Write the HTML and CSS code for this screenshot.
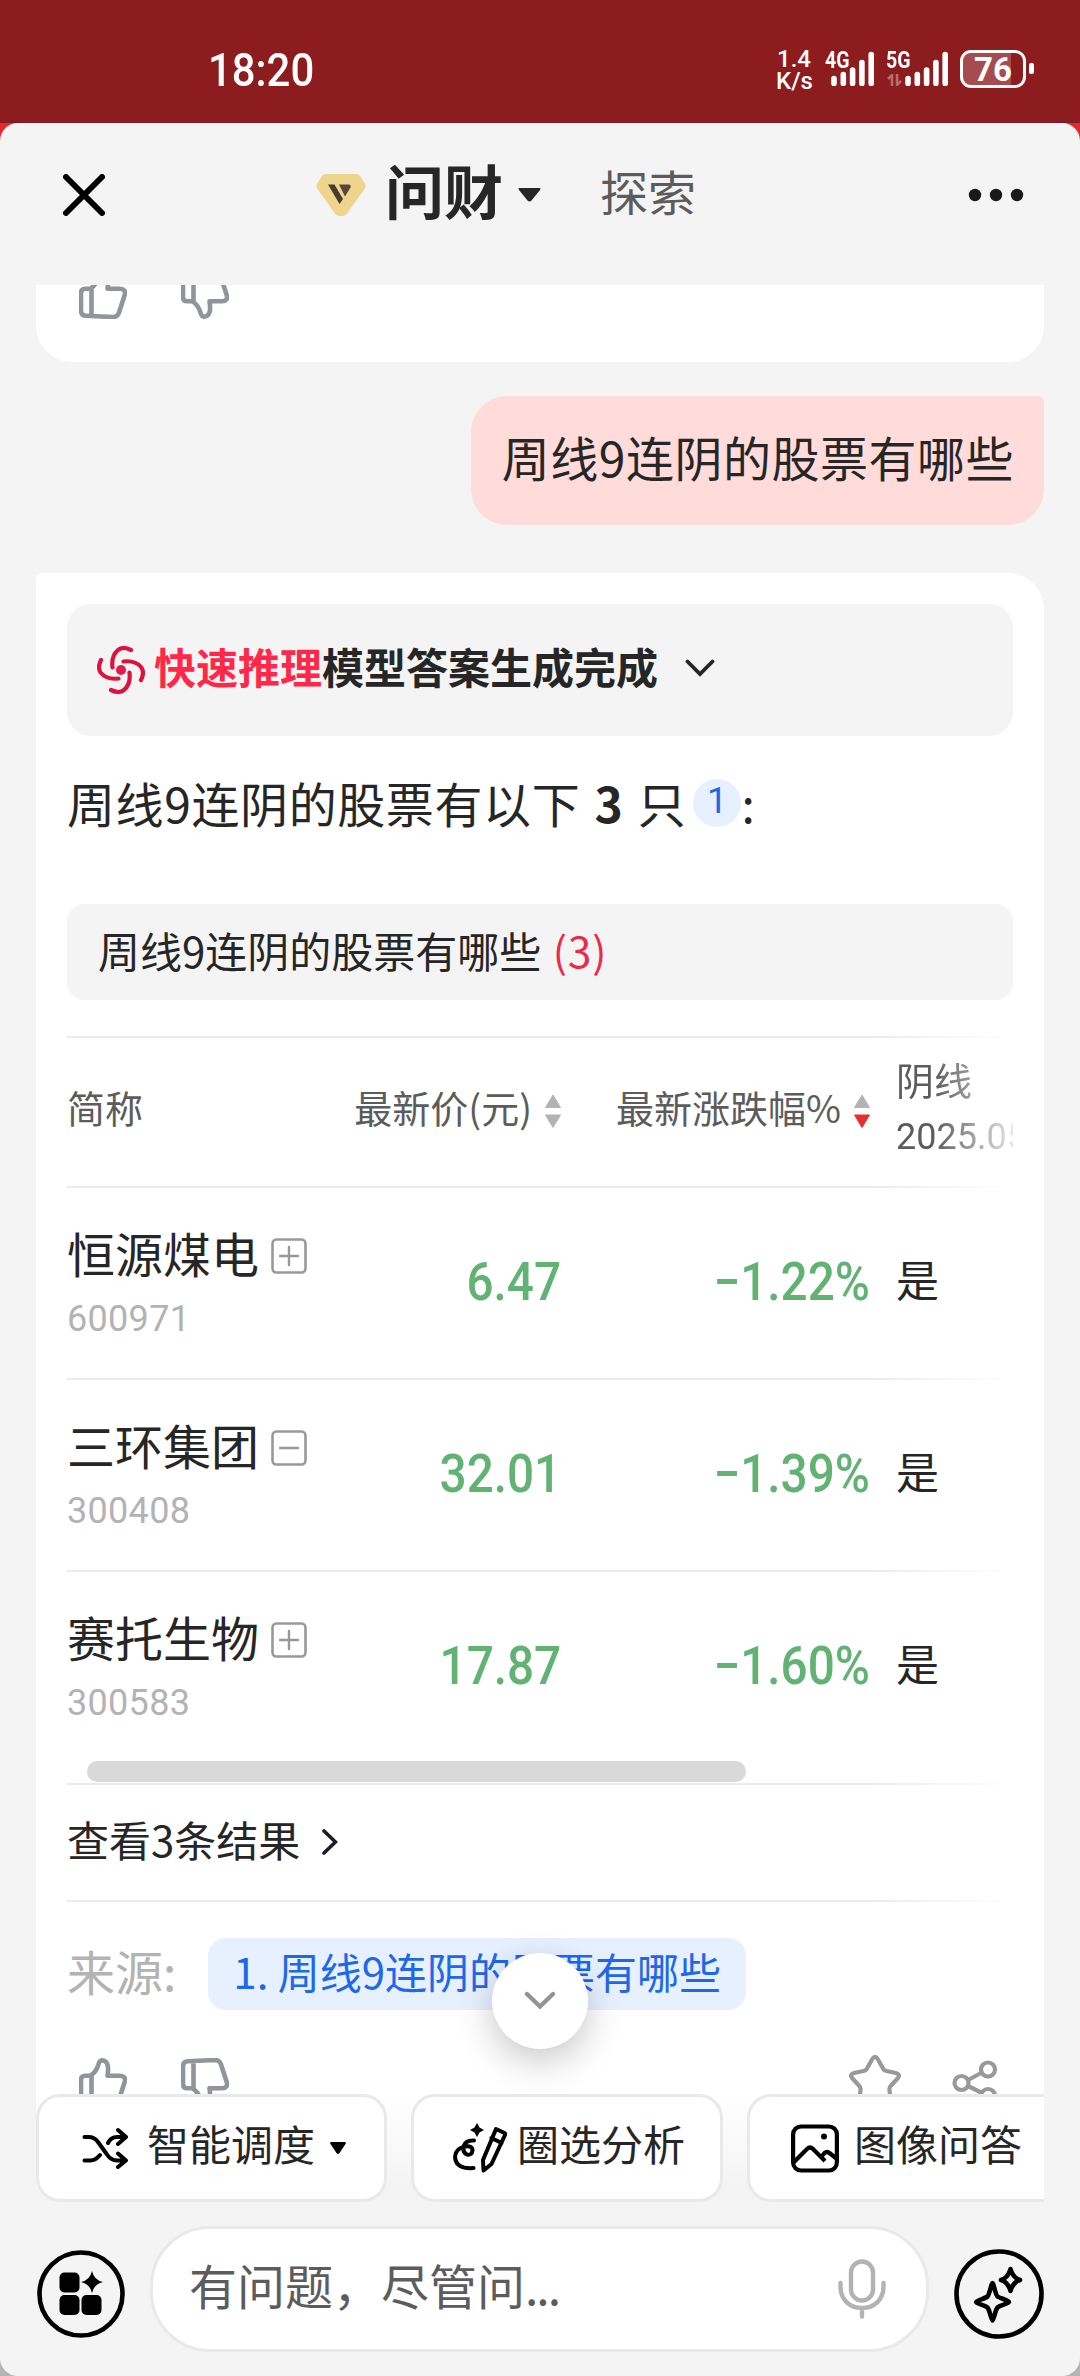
FILE: index.html
```html
<!DOCTYPE html>
<html lang="zh-CN">
<head>
  <meta charset="UTF-8">
  <title>问财</title>
  <link rel="stylesheet" href="styles.css">
</head>
<body>

<!-- icons used more than once -->
<svg class="defs" width="0" height="0">
  <symbol id="thumb" viewBox="0 0 48 48">
    <path d="M2 22v17.500q0 5 5 5.200l27 1.300q4.500 0 6-4.500l5.700-17.500q1.500-6.300-4.700-6.300h-12.500q2.500-15.200-5.500-15.400q-2.500 0-3.700 4.500q-2.300 7.800-8.300 10.900h-5q-4 .3-4 4.300zM12.500 18v26.500" fill="none" stroke="currentColor" stroke-width="4.600" stroke-linejoin="round"/>
  </symbol>
  <symbol id="sort" viewBox="0 0 16 34">
    <path d="M8 1l7.500 12.500h-15z" fill="#b3b3b3" stroke="#b3b3b3" stroke-linejoin="round"/>
    <path d="M8 33.500l7.500-12.500h-15z" fill="currentColor" stroke="currentColor" stroke-linejoin="round"/>
  </symbol>
  <symbol id="signal" viewBox="0 0 44 36">
    <path d="M3 28.500v5M12.300 24.500v9M21.600 20v13.500M30.900 12.500v21M40.200 4.500v29" stroke="#fff" stroke-width="5.600" stroke-linecap="round"/>
  </symbol>
  <symbol id="plus" viewBox="0 0 36 36">
    <rect x="1.500" y="1.500" width="33" height="33" rx="4" fill="none" stroke="#999" stroke-width="2.600"/>
    <path d="M9 18h18M18 9v18" stroke="#999" stroke-width="2.400" stroke-linecap="round"/>
  </symbol>
  <symbol id="minus" viewBox="0 0 36 36">
    <rect x="1.500" y="1.500" width="33" height="33" rx="4" fill="none" stroke="#999" stroke-width="2.600"/>
    <path d="M9 18h18" stroke="#999" stroke-width="2.400" stroke-linecap="round"/>
  </symbol>
</svg>

<div class="status">
  <div class="time"><span>18:20</span></div>
  <div class="speed"><div>1.4</div><div>K/s</div></div>
  <div class="net net-4g"><span>4G</span><svg width="44" height="36"><use href="#signal"/></svg></div>
  <div class="net net-5g">
    <span>5G</span>
    <svg class="updown" width="15" height="12" viewBox="0 0 15 12"><path d="M1 5l4-4v11M14 7l-4 4V0" fill="none" stroke="#bd6a6c" stroke-width="2.500"/></svg>
    <svg width="44" height="36"><use href="#signal"/></svg>
  </div>
  <div class="battery"><span>76</span></div>
  <div class="nub"></div>
</div>

<div class="panel-wrap">
<div class="panel">

  <div class="header">
    <svg class="close" width="42" height="42" viewBox="0 0 42 42"><path d="M3 3l36 36M39 3L3 39" stroke="#000" stroke-width="6" stroke-linecap="round"/></svg>
    <svg class="vip" width="50" height="42" viewBox="0 0 50 42">
      <path d="M10 0h30q2.500 0 4 2l4.500 7q2 3 0 6l-17.500 24.500q-2 2.500-4 2.500h-4q-2 0-4-2.500l-17.500-24.500q-2-3 0-6l4.500-7q1.500-2 4-2z" fill="#efd48e"/>
      <path d="M12 10.500h6.500L27 25l-3.500 5z" fill="#453b30"/><path d="M23 10.500h10q2.500 1 1.500 3l-5.500 9z" fill="#54483a"/>
    </svg>
    <span class="tab active">问财</span>
    <svg class="tab-caret" width="23" height="14" viewBox="0 0 23 14"><path d="M2 0h19q2.500 0 1 2l-8.500 10.500q-2 2-4 0L1 2q-1.500-2 1-2z" fill="#262626"/></svg>
    <span class="tab">探索</span>
    <svg class="more" width="56" height="14" viewBox="0 0 56 14"><g fill="#191919"><circle cx="7" cy="7" r="6.200"/><circle cx="28" cy="7" r="6.200"/><circle cx="49" cy="7" r="6.200"/></g></svg>
  </div>

  <div class="chat">
    <div class="card prev">
      <svg class="thumb" width="48" height="48"><use href="#thumb"/></svg>
      <svg class="thumb down" width="48" height="48"><use href="#thumb"/></svg>
    </div>

    <div class="question">周线9连阴的股票有哪些</div>

    <div class="card answer">
      <div class="model">
        <svg width="48" height="48" viewBox="0 0 48 48">
          <g fill="none" stroke="#d8143f" stroke-width="4.200" stroke-linecap="round">
            <path id="arm" d="M34 4q-8-4-13 0q-7 6-5.500 17.500"/>
            <use href="#arm" transform="rotate(90 24 24)"/>
            <use href="#arm" transform="rotate(180 24 24)"/>
            <use href="#arm" transform="rotate(270 24 24)"/>
          </g>
          <circle cx="24" cy="24" r="5" fill="#e6194a"/>
        </svg>
        <b><em>快速推理</em>模型答案生成完成</b>
        <svg class="chev" width="30" height="18" viewBox="0 0 30 18"><path d="M2.500 2.500L15 15 27.500 2.500" fill="none" stroke="#262626" stroke-width="3.800" stroke-linecap="round"/></svg>
      </div>

      <div class="summary">周线9连阴的股票有以下 <b>3</b> 只<span class="ref">1</span>:</div>

      <div class="table-title">周线9连阴的股票有哪些 <span>(3)</span></div>

      <div class="table">
        <div class="row head">
          <div>简称</div>
          <div class="num">最新价(元)<svg class="sort" width="16" height="34"><use href="#sort"/></svg></div>
          <div class="num">最新涨跌幅%<svg class="sort on" width="16" height="34"><use href="#sort"/></svg></div>
          <div class="last">阴线<br><span>2025.05</span></div>
        </div>
        <div class="row">
          <div><div class="name">恒源煤电<svg width="36" height="36"><use href="#plus"/></svg></div><div class="code">600971</div></div>
          <div class="num green"><span>6.47</span></div>
          <div class="num green"><span>−1.22%</span></div>
          <div class="last">是</div>
        </div>
        <div class="row">
          <div><div class="name">三环集团<svg width="36" height="36"><use href="#minus"/></svg></div><div class="code">300408</div></div>
          <div class="num green"><span>32.01</span></div>
          <div class="num green"><span>−1.39%</span></div>
          <div class="last">是</div>
        </div>
        <div class="row">
          <div><div class="name">赛托生物<svg width="36" height="36"><use href="#plus"/></svg></div><div class="code">300583</div></div>
          <div class="num green"><span>17.87</span></div>
          <div class="num green"><span>−1.60%</span></div>
          <div class="last">是</div>
        </div>
        <div class="scrollbar"></div>
        <div class="all">查看3条结果<svg width="16" height="26" viewBox="0 0 16 26"><path d="M2 2l11.500 11L2 24" fill="none" stroke="#1c1c28" stroke-width="3.600" stroke-linecap="round"/></svg></div>
      </div>

      <div class="source">来源:<span>1. 周线9连阴的股票有哪些</span></div>

      <div class="actions">
        <svg class="thumb" width="48" height="48"><use href="#thumb"/></svg>
        <svg class="thumb down" width="48" height="48"><use href="#thumb"/></svg>
        <svg class="star" width="52" height="52" viewBox="0 0 52 52"><path d="M23 4.500q3-5 6 0l5 9q1 2 3.500 2.500l9.500 2q5 1.500 1.500 5.500l-6.500 7q-2 2-1.500 4.500l1 9.500q0 5-4.500 3.500l-8.500-4q-2.500-1-5 0l-8.500 4q-4.500 1.500-4.500-3.500l1-9.500q.5-2.500-1.500-4.500l-6.500-7q-3.500-4 1.500-5.500l9.500-2q2.500-.5 3.500-2.500z" fill="none" stroke="#999" stroke-width="4.200"/></svg>
        <svg class="share" width="46" height="46" viewBox="0 0 46 46"><g fill="none" stroke="#999" stroke-width="4.200"><circle cx="9.500" cy="23" r="7"/><circle cx="36" cy="9.500" r="7"/><circle cx="36" cy="36" r="7"/><path d="M16 20l14-7.500M16 26l14 7"/></g></svg>
      </div>
    </div>
  </div>

  <div class="to-bottom">
    <svg width="32" height="20" viewBox="0 0 32 20"><path d="M3 3l13 12.500L29 3" fill="none" stroke="#92929b" stroke-width="4.400" stroke-linecap="round"/></svg>
  </div>

  <div class="chips">
    <div class="chip c1">
      <svg width="46" height="42" viewBox="0 0 46 42"><g fill="none" stroke="#000" stroke-width="4" stroke-linecap="round" stroke-linejoin="round"><path d="M2.500 10h4q6 0 9.500 5l9 12.500q4 6 10 6h8M36 26.500l8 7-8 6.500M2.500 33.500h6q5 0 9.500-5.500M26 16q3-6 9-6h8M36 3l8 7-8 7"/></g></svg>
      <span>智能调度</span>
      <svg class="caret" width="16" height="13" viewBox="0 0 16 13"><path d="M1 0h14q1.500.5.500 2l-6 9q-1.500 2-3 0l-6-9q-1-1.500.5-2z"/></svg>
    </div>
    <div class="chip c2">
      <svg width="54" height="50" viewBox="0 0 54 50"><path d="M24 0l2.500 4.500L31 7l-4.500 2.500L24 14l-2.500-4.500L17 7l4.500-2.500z"/><g fill="none" stroke="#000" stroke-width="4" stroke-linejoin="round" stroke-linecap="round"><path d="M43 6l8.500 4q1 .5.500 2L38.500 41l-8 6.500-.5-10.500zM38.500 15l10 5"/><path d="M21 17.500q-8-.5-10 5q-2 7 3 9q5 1 5.500-4q0-5-7-4q-10 1.500-10.500 10.500q1 12.500 18.500 11"/></g></svg>
      <span>圈选分析</span>
    </div>
    <div class="chip c3">
      <svg width="48" height="49" viewBox="0 0 48 49"><g fill="none" stroke="#000" stroke-width="4.200"><rect x="2.100" y="2.500" width="43.800" height="44" rx="8"/><path d="M2 39l14-14q3-3 6 0l12 12M30.500 32.500l3-3.500q2.500-2 5 0l7.500 6" stroke-linejoin="round"/></g><circle cx="33" cy="12.500" r="3"/></svg>
      <span>图像问答</span>
    </div>
  </div>

  <div class="input-bar">
    <svg width="88" height="88" viewBox="0 0 88 88"><circle cx="44" cy="44" r="41.500" fill="none" stroke="#000" stroke-width="4.600"/><rect x="22.500" y="22.500" width="20" height="20" rx="5"/><rect x="22.500" y="45" width="20" height="20" rx="5"/><rect x="44.500" y="45" width="20" height="20" rx="5"/><path d="M55 21q2 9 11 11q-9 2-11 11q-2-9-11-11q9-2 11-11z"/></svg>
    <div class="input">
      <span>有问题，尽管问<i>...</i></span>
      <svg width="48" height="60" viewBox="0 0 48 60"><g fill="none" stroke="#b3b3b3" stroke-width="4.400" stroke-linecap="round"><rect x="13" y="2.500" width="22" height="39" rx="11"/><path d="M2.500 24v3.500c0 13 9 21.500 21.500 21.500s21.500-8.500 21.500-21.500V24M24 49v8.500"/></g></svg>
    </div>
    <svg width="90" height="90" viewBox="0 0 90 90"><g fill="none" stroke="#000" stroke-linejoin="round"><circle cx="45" cy="45" r="42.500" stroke-width="4.600"/><path d="M38.500 34c1 0 3 12 5 13.500s11.500 4 11.500 5.500-9.500 3.500-11.500 5.500-4 13-5 13-3-11-5-13-11.500-4-11.500-5.500 9.500-3.500 11.500-5.500 4-13.500 5-13.500z" stroke-width="4.600"/><path d="M56.500 20q2.500 9 9.500 11q-7 2-9.500 11q-2.500-9-9.500-11q7-2 9.500-11z" stroke-width="4.600"/></g></svg>
  </div>

</div>
</div>

</body>
</html>
```

FILE: styles.css
```css
* {
  box-sizing: border-box;
}
body {
  margin: 0;
  width: 1080px;
  height: 2376px;
  overflow: hidden;
  font-family: "Noto Sans CJK SC", sans-serif;
  color: #262626;
}
svg {
  display: block;
  flex: none;
}
.defs {
  position: absolute;
}

/* status bar */
.status {
  display: flex;
  align-items: flex-start;
  height: 123px;
  padding: 50px 0 0 208px;
  background: #8d1c1f;
  border-bottom: 1px solid #76202a;
  color: #fff;
  font-family: Roboto, sans-serif;
}
.time {
  width: 568px;
  font-size: 46px;
  font-weight: 500;
  line-height: 41px;
}
.time span {
  display: inline-block;
  transform: scaleX(0.91);
  transform-origin: left;
}
.speed {
  width: 36px;
  font-size: 24px;
  font-weight: 500;
  line-height: 22px;
  text-align: center;
  margin-top: -2px;
}
.net {
  position: relative;
  margin-left: 19px;
}
.net-5g {
  margin-left: 30px;
}
.net span {
  position: absolute;
  left: -6px;
  top: -1px;
  font-size: 23px;
  font-weight: 700;
  line-height: 23px;
  transform: scaleX(0.85);
  transform-origin: left;
}
.net-5g span {
  left: -19px;
}
.updown {
  position: absolute;
  left: -18px;
  top: 24px;
}
.battery {
  width: 66px;
  height: 38px;
  margin-left: 11px;
  border: 3px solid #fff;
  border-radius: 11px;
  background: linear-gradient(90deg, #a64b4e 48px, transparent 48px);
  font-size: 33px;
  font-weight: 700;
  line-height: 33px;
  text-align: center;
}
.nub {
  width: 5px;
  height: 11px;
  margin: 13px 0 0 3px;
  border-radius: 2px;
  background: #fff;
}

.panel-wrap {
  height: 2253px;
  background: linear-gradient(#e8282e 50%, #b5b5b5 50%);
}
.panel {
  position: relative;
  height: 2253px;
  border-radius: 18px;
  background: #f4f4f4;
}

/* header */
.header {
  display: flex;
  align-items: center;
  height: 162px;
  padding: 0 35px 18px 63px;
}
.vip {
  margin-left: 211px;
}
.tab {
  font-size: 48px;
  color: #5c5c5c;
  line-height: 60px;
  margin-left: 59px;
  margin-top: -10px;
}
.tab.active {
  font-size: 59px;
  font-weight: 700;
  color: #262626;
  margin-left: 19px;
  margin-top: -11px;
}
.tab-caret {
  margin-left: 15px;
}
.more {
  margin-left: auto;
  margin-right: 21px;
}

/* chat */
.chat {
  display: flex;
  flex-direction: column;
  height: 1809px;
  padding: 0 36px;
  overflow: hidden;
}
.card {
  background: #fff;
}
.prev {
  display: flex;
  flex: none;
  gap: 54px;
  height: 77px;
  padding-left: 43px;
  border-radius: 0 0 36px 36px;
}
.prev .thumb {
  margin-top: -14px;
}
.thumb {
  color: #8f959b;
}
.thumb.down {
  transform: scaleY(-1);
}
.question {
  align-self: flex-end;
  flex: none;
  height: 129px;
  margin-top: 34px;
  padding: 0 30px 0 31px;
  border-radius: 36px 6px 36px 36px;
  background: #ffdbd9;
  font-size: 48px;
  line-height: 121px;
  letter-spacing: 0.5px;
}
.answer {
  flex: none;
  margin-top: 48px;
  padding: 31px 31px 0;
  border-radius: 6px 36px 0 0;
}
.model {
  display: flex;
  align-items: center;
  height: 132px;
  padding-left: 30px;
  border-radius: 24px;
  background: #f4f4f4;
  font-size: 42px;
}
.model b {
  margin: -9px 0 0 9px;
}
.model em {
  font-style: normal;
  color: #ff2848;
}
.chev {
  margin: -4px 0 0 27px;
}
.summary {
  display: flex;
  height: 168px;
  font-size: 48px;
  line-height: 132px;
  letter-spacing: 0.6px;
  white-space: pre;
}
.summary b {
  margin: 0 3px;
}
.ref {
  width: 48px;
  height: 48px;
  margin: 43px 0 0 7px;
  border-radius: 50%;
  background: #e6f0ff;
  color: #2068e0;
  font-family: Roboto, sans-serif;
  font-size: 36px;
  line-height: 45px;
  text-align: center;
}
.table-title {
  height: 96px;
  padding-left: 31px;
  border-radius: 18px;
  background: #f4f4f4;
  font-size: 42px;
  line-height: 91px;
}
.table-title span {
  margin-left: 2px;
  letter-spacing: 1px;
  color: #eb2a4a;
}

/* table */
.table {
  margin-top: 36px;
}
.row {
  display: grid;
  grid-template-columns: 240px 254px 309px 143px;
  align-items: center;
  height: 192px;
  background: linear-gradient(90deg, #ebebeb 85%, #fff) top / 100% 2px no-repeat;
}
.row.head {
  height: 150px;
  font-size: 38px;
  line-height: 54px;
  color: #5c5c5c;
}
.head > div {
  margin-top: -8px;
}
.num {
  display: flex;
  justify-content: flex-end;
  align-items: center;
}
.sort {
  margin: 7px 0 0 13px;
  color: #b3b3b3;
}
.sort.on {
  color: #e62e2e;
}
.green {
  color: #61b273;
  font-family: Roboto, sans-serif;
  font-size: 53px;
  font-weight: 500;
  line-height: 60px;
}
.green span {
  transform: scaleX(0.9);
  transform-origin: right;
}
.last {
  padding-left: 26px;
  overflow: hidden;
  font-size: 43px;
}
.row:not(.head) .last {
  margin-top: -8px;
}
.head .last {
  margin-top: -6px;
  -webkit-mask-image: linear-gradient(90deg, #000 45%, rgba(0,0,0,0.15));
  mask-image: linear-gradient(90deg, #000 45%, rgba(0,0,0,0.15));
  font-size: 38px;
}
.head .last span {
  font-family: Roboto, sans-serif;
  font-size: 36px;
}
.name {
  display: flex;
  align-items: center;
  font-size: 48px;
  line-height: 54px;
}
.name svg {
  margin: 8px 0 0 12px;
}
.code {
  margin-top: 13px;
  margin-bottom: -7px;
  font-family: Roboto, sans-serif;
  font-size: 36px;
  line-height: 54px;
  letter-spacing: 0.3px;
  color: #b3b3b3;
}
.scrollbar {
  width: 659px;
  height: 21px;
  margin: -1px 0 1px 20px;
  border-radius: 11px;
  background: #d9d9d9;
}
.all {
  display: flex;
  align-items: center;
  height: 117px;
  padding-bottom: 7px;
  background: linear-gradient(90deg, #ebebeb 85%, #fff) top / 100% 2px no-repeat;
  font-size: 42px;
}
.all svg {
  margin: 8px 0 0 22px;
}
.source {
  display: flex;
  height: 158px;
  padding-top: 38px;
  background: linear-gradient(90deg, #ebebeb 85%, #fff) top / 100% 2px no-repeat;
  font-size: 48px;
  line-height: 65px;
  color: #b3b3b3;
}
.source span {
  height: 72px;
  margin-left: 32px;
  padding: 0 25px;
  border-radius: 18px;
  background: #e6f0ff;
  font-size: 42px;
  color: #2068e8;
}
.actions {
  display: flex;
  height: 60px;
  padding-left: 12px;
}
.actions .down {
  margin-left: 54px;
}
.star {
  margin: -3px 0 0 620px;
}
.share {
  margin: 2px 0 0 51px;
}

/* scroll down button */
.to-bottom {
  position: absolute;
  left: 492px;
  top: 1830px;
  display: flex;
  align-items: center;
  justify-content: center;
  width: 96px;
  height: 96px;
  border-radius: 50%;
  background: #fff;
  box-shadow: 0 12px 36px rgba(0,0,0,0.22);
}

/* bottom */
.chips {
  position: relative;
  display: flex;
  gap: 24px;
  height: 108px;
  margin: 0 36px;
  overflow: hidden;
  background: linear-gradient(#fff, #f4f4f4 85%);
}
.chip {
  display: flex;
  flex: none;
  align-items: center;
  border: 3px solid #e9e9e9;
  border-radius: 24px;
  background: #fff;
  font-size: 42px;
  line-height: 96px;
}
.chip span {
  margin-top: -10px;
}
.chip svg {
  margin-top: 0;
}
.c1 {
  width: 351px;
  padding-left: 43px;
}
.c1 svg {
  margin-right: 19px;
}
.c1 .caret {
  margin: 1px 0 0 15px;
}
.c2 {
  width: 312px;
  padding-left: 39px;
}
.c2 svg {
  margin-right: 10px;
}
.c3 {
  width: 351px;
  padding-left: 41px;
}
.c3 svg {
  margin-right: 15px;
}
.input-bar {
  display: flex;
  align-items: center;
  padding: 24px 36px 0 37px;
}
.input-bar > svg {
  margin-top: 10px;
}
.input {
  display: flex;
  justify-content: space-between;
  align-items: center;
  width: 780px;
  height: 126px;
  margin: 0 25px;
  padding: 0 40px 0 36px;
  border: 3px solid #e9e9e9;
  border-radius: 60px;
  background: #fff;
  font-size: 48px;
  line-height: 110px;
  color: #5c5c5c;
}
.input span {
  margin-top: -10px;
}
.input i {
  font-style: normal;
  letter-spacing: -2px;
}
```
